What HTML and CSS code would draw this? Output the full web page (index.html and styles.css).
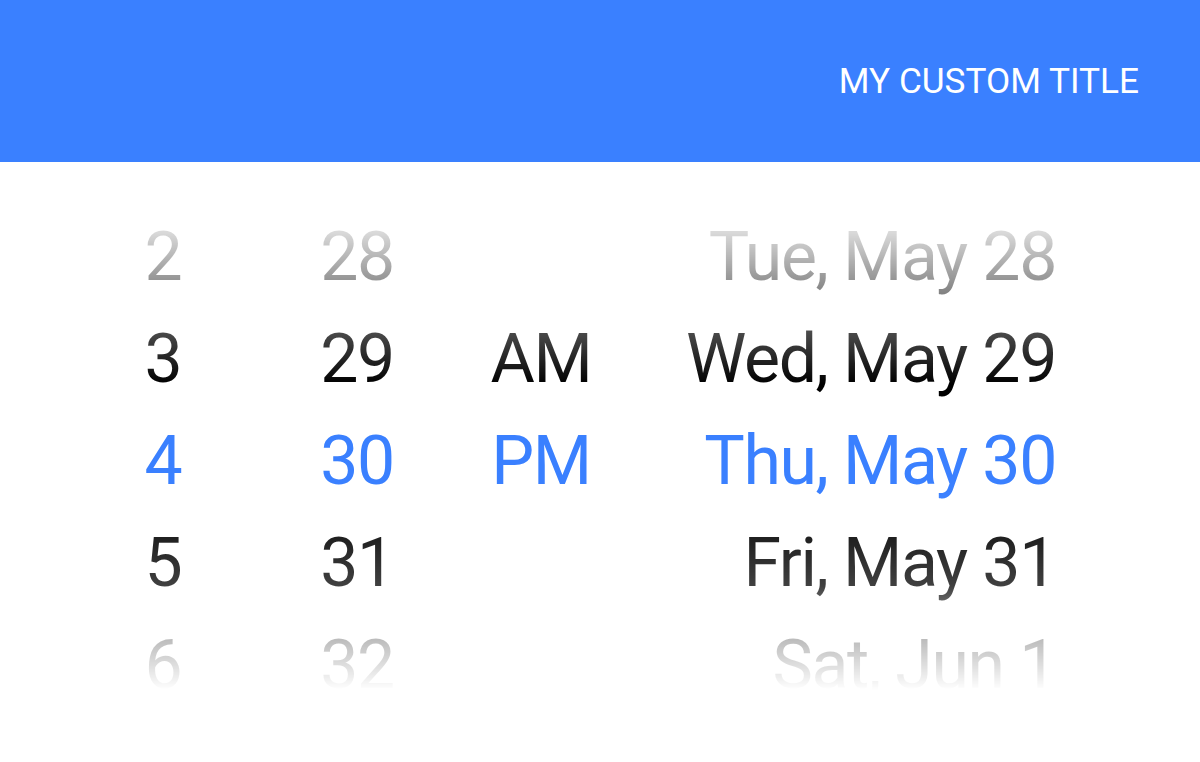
FILE: index.html
```html
<!DOCTYPE html>
<html>
<head>
<meta charset="utf-8">
<link rel="stylesheet" href="styles.css">
</head>
<body>
<header class="topbar">
  <h1 class="title">MY CUSTOM TITLE</h1>
</header>
<main class="picker">
  <div class="wheel">
    <span class="c1">2</span><span class="c2">28</span><span class="c3"></span><span class="c4">Tue, May 28</span>
    <span class="c1">3</span><span class="c2">29</span><span class="c3">AM</span><span class="c4">Wed, May 29</span>
    <span class="c1 sel">4</span><span class="c2 sel">30</span><span class="c3 sel">PM</span><span class="c4 sel">Thu, May 30</span>
    <span class="c1">5</span><span class="c2">31</span><span class="c3"></span><span class="c4">Fri, May 31</span>
    <span class="c1">6</span><span class="c2">32</span><span class="c3"></span><span class="c4">Sat, Jun 1</span>
  </div>
</main>
</body>
</html>
```
FILE: styles.css
```css
html, body {
  margin: 0;
  padding: 0;
  background: #fff;
  font-family: Roboto, "Noto Sans", sans-serif;
}
.topbar {
  height: 162px;
  background: #3a80ff;
  display: flex;
  align-items: center;
  justify-content: flex-end;
  padding: 0 61px 0 0;
  box-sizing: border-box;
}
.title {
  margin: 0;
  color: #fff;
  font-weight: 400;
  font-size: 35.2px;
}
.picker {
  margin-top: 44px;
  height: 484px;
  overflow: hidden;
  -webkit-mask-image: linear-gradient(to bottom, rgba(0,0,0,0) 0px, rgba(0,0,0,1) 178px, rgba(0,0,0,1) 284px, rgba(0,0,0,0.75) 380px, rgba(0,0,0,0.27) 432px, rgba(0,0,0,0) 484px);
  mask-image: linear-gradient(to bottom, rgba(0,0,0,0) 0px, rgba(0,0,0,1) 178px, rgba(0,0,0,1) 284px, rgba(0,0,0,0.75) 380px, rgba(0,0,0,0.27) 432px, rgba(0,0,0,0) 484px);
}
.wheel {
  display: grid;
  grid-template-columns: 206px 182px 186px 1fr;
  padding: 0 144px 0 60px;
  font-size: 68px;
  line-height: 102px;
  letter-spacing: -1.4px;
  color: #000;
  white-space: nowrap;
}
.c1, .c2, .c3 { text-align: center; }
.c4 { text-align: right; }
.sel { color: #3a80ff; }
```
